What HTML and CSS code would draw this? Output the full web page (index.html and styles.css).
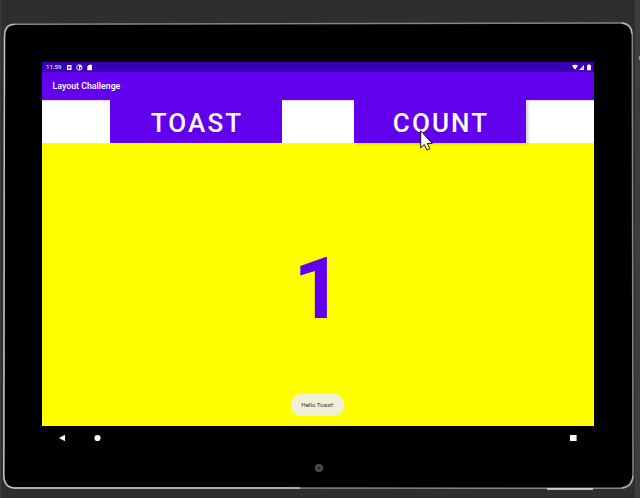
FILE: index.html
```html
<!DOCTYPE html>
<html lang="en">
<head>
<meta charset="utf-8">
<title>Layout Challenge</title>
<link rel="stylesheet" href="styles.css">
</head>
<body>
<div class="tablet">
  <svg class="frame" viewBox="0 0 640 498" aria-hidden="true">
    <path class="body" d="M14.500 24.300L620 23Q632 23 632.300 35L633 475Q633 488 620 488.300L15 488Q4 488 3.700 475L4.500 35Q4.500 24.300 14.500 24.300Z"/>
    <path class="edge-light" d="M4.500 36L3.800 475Q4 488 15 488L300 488"/>
    <path class="edge-corner" d="M4.500 37Q4.500 24.300 15 24.300M622 23Q631 24 632 34M633 476Q632 486 622 488"/>
    <path class="edge-port" d="M547 489H593"/>
  </svg>
  <main class="screen">
    <div class="status">
      <span class="clock">11:59</span>
      <svg class="notes" viewBox="0 0 26 7" aria-hidden="true">
        <path fill-rule="evenodd" d="M0 1h4.500v5H0zM1.300 2.400v2h2v-2z"/>
        <circle cx="12.300" cy="3.500" r="2.700" class="ring"/>
        <path d="M12 1.200h1.800q1.200.5 1 2h-1.700v2.300H12z"/>
        <path d="M20.300 2.500L22 .8h3v5.400h-4.700z"/>
      </svg>
      <svg class="signals" viewBox="0 0 20 7" aria-hidden="true">
        <path d="M0 1.700Q3 -.4 6 1.700L3 5.800z"/>
        <path fill-rule="evenodd" d="M7 6L12 .9V6zM9.700 4.900h1V3.500z"/>
        <path d="M15 1.200h1V.5h2v.7h1v5h-4z"/>
      </svg>
    </div>
    <header class="appbar">Layout Challenge</header>
    <div class="buttons">
      <button class="btn">TOAST</button>
      <button class="btn raised">COUNT</button>
    </div>
    <section class="counter">
      <span class="value">1</span>
      <div class="toast">Hello Toast!</div>
    </section>
  </main>
  <nav class="nav">
    <svg width="7" height="8" viewBox="0 0 7 8"><path d="M0 4L6 .8v6.400z"/></svg>
    <svg class="home" width="7" height="8" viewBox="0 0 7 8"><circle cx="3.500" cy="4" r="3.100"/></svg>
    <svg class="recent" width="7" height="8" viewBox="0 0 7 8"><path d="M0 1h6.600v6H0z"/></svg>
  </nav>
  <div class="camera"></div>
</div>
<svg class="cursor" width="14" height="21" viewBox="0 0 14 21" aria-hidden="true">
  <path d="M.7 .8v17l3.600-3.300 2.700 5.600 2.900-1.300-2.600-5.400h4.900z"/>
</svg>
<i class="marker"></i>
</body>
</html>
```
FILE: styles.css
```css
* { box-sizing: border-box; }
body {
  margin: 0;
  width: 640px;
  height: 498px;
  overflow: hidden;
  position: relative;
  font-family: Roboto, sans-serif;
  background: linear-gradient(90deg, #3b3b3d 0 1px, #2d2e30 1px 635px, #3b3e40 635px);
}
.tablet { height: 498px; padding: 62px 46px 0 42px; }
.frame { position: absolute; inset: 0; width: 640px; height: 498px; z-index: -1; }
.frame path { fill: none; }
.frame .body { fill: #000; stroke: #858585; stroke-width: 1.5; }
.frame .edge-light { stroke: #c4c4c4; stroke-width: 1.3; }
.frame .edge-corner { stroke: #b8b8b8; stroke-width: 1.3; }
.frame .edge-port { stroke: #e8e8e8; stroke-width: 1.5; }
.screen { width: 552px; height: 364px; display: flex; flex-direction: column; }
.status {
  height: 10px;
  display: flex;
  align-items: center;
  padding: 0 2px 0 4px;
  background: #3900b3;
  color: #fff;
}
.status svg { fill: #fff; height: 7px; }
.clock { width: 21px; font-size: 6.2px; line-height: 10px; }
.notes { width: 26px; }
.notes .ring { fill: none; stroke: #fff; stroke-width: .9; }
.signals { width: 20px; margin-left: auto; }
.appbar {
  height: 28px;
  padding-left: 10.500px;
  line-height: 29px;
  font-size: 8.8px;
  font-weight: 500;
  color: #fff;
  background: #6200ee;
}
.buttons {
  height: 43px;
  display: flex;
  gap: 72px;
  padding-left: 68px;
  background: #fff;
  box-shadow: inset 0 1px 1px #ddd;
}
.btn {
  width: 172px;
  border: 0;
  padding: 4px 0 0 2px;
  background: #6200ee;
  color: #fff;
  font: 500 26px/39px Roboto, sans-serif;
  letter-spacing: 2.1px;
}
.raised { box-shadow: 2px 1px 3px rgba(0, 0, 0, .2); z-index: 1; }
.counter {
  flex: 1;
  display: flex;
  flex-direction: column;
  align-items: center;
  background: #ff0;
}
.value {
  margin-top: 96px;
  height: 100px;
  font-size: 86px;
  line-height: 100px;
  font-weight: 700;
  color: #6200ee;
}
.toast {
  width: 53px;
  height: 22px;
  margin-top: 55px;
  margin-right: 1px;
  border-radius: 10px;
  background: #f0f0d8;
  color: #333;
  font-size: 6.1px;
  line-height: 22px;
  text-align: center;
}
.nav { height: 24px; display: flex; align-items: center; padding: 0 17px; fill: #fff; }
.home { margin-left: 28px; }
.recent { margin-left: auto; }
.camera {
  width: 8px;
  height: 8px;
  margin: 14px 0 0 273px;
  border-radius: 50%;
  background: radial-gradient(#222 0 1px, #4c4c4c 2px);
}
.cursor { position: absolute; left: 420px; top: 130px; z-index: 2; }
.cursor path { fill: #fff; stroke: #111; stroke-width: 1; }
.marker { position: absolute; left: 639px; top: 56px; width: 1px; height: 4px; background: #8a9bc0; }
```
